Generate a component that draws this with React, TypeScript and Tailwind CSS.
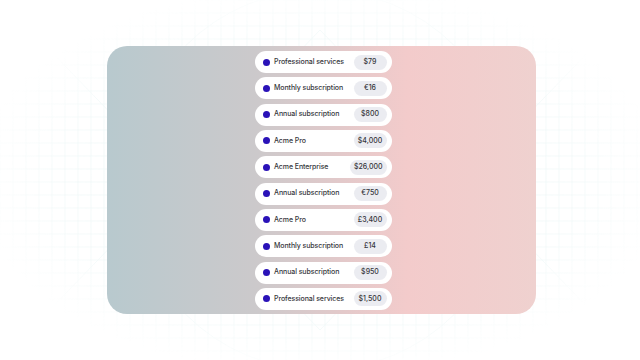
const ROWS = [
  { name: "Professional services", price: "$79" },
  { name: "Monthly subscription", price: "€16" },
  { name: "Annual subscription", price: "$800" },
  { name: "Acme Pro", price: "$4,000" },
  { name: "Acme Enterprise", price: "$26,000" },
  { name: "Annual subscription", price: "€750" },
  { name: "Acme Pro", price: "£3,400" },
  { name: "Monthly subscription", price: "£14" },
  { name: "Annual subscription", price: "$950" },
  { name: "Professional services", price: "$1,500" },
]

function GridBackdrop() {
  const lines = []
  for (let x = 0; x <= 640; x += 13) lines.push(<line key={"v" + x} x1={x} y1={0} x2={x} y2={360} />)
  for (let y = 0; y <= 360; y += 13) lines.push(<line key={"h" + y} x1={0} y1={y} x2={640} y2={y} />)
  return (
    <svg className="absolute inset-0" width="640" height="360" viewBox="0 0 640 360">
      <defs>
        <radialGradient id="fade" cx="50%" cy="50%" r="55%">
          <stop offset="0%" stopColor="#fff" stopOpacity="1" />
          <stop offset="75%" stopColor="#fff" stopOpacity="0.5" />
          <stop offset="100%" stopColor="#fff" stopOpacity="0" />
        </radialGradient>
        <mask id="m">
          <rect width="640" height="360" fill="url(#fade)" />
        </mask>
      </defs>
      <g mask="url(#m)" stroke="#e2f2f2" strokeWidth="0.7" fill="none">
        {lines}
        <line x1={40} y1={40} x2={320} y2={330} />
        <line x1={600} y1={40} x2={320} y2={330} />
        <line x1={40} y1={320} x2={320} y2={30} />
        <line x1={600} y1={320} x2={320} y2={30} />
        <circle cx={320} cy={180} r={190} />
      </g>
    </svg>
  )
}

export default function App() {
  return (
    <div className="relative w-[640px] h-[360px] bg-white overflow-hidden flex items-center justify-center" style={{ fontFamily: "Inter, 'Noto Sans', sans-serif" }}>
      <GridBackdrop />
      <div className="relative ml-[3px] w-[429px] h-[268px] rounded-[20px] bg-[linear-gradient(90deg,#b8c9ce_0%,#ccc9cb_35%,#e3c9ca_55%,#f3cbcb_70%,#efd1cf_100%)] flex flex-col items-center pt-[5px] gap-[4.33px]">
        {ROWS.map((r, i) => (
          <div key={i} className="ml-[3px] w-[137px] h-[22px] shrink-0 rounded-full bg-white flex items-center pl-[8px] pr-[5px]">
            <span className="w-[7px] h-[7px] rounded-full bg-[#2a12b8] shrink-0" />
            <span className="ml-[4.5px] text-[7px] font-medium tracking-[-0.08px] text-[#36363b] flex-1 whitespace-nowrap">{r.name}</span>
            <span className="h-[15px] min-w-[33px] px-[4px] rounded-full bg-[#ebecf1] text-[7px] font-medium text-[#36363b] flex items-center justify-center">{r.price}</span>
          </div>
        ))}
      </div>
    </div>
  )
}
